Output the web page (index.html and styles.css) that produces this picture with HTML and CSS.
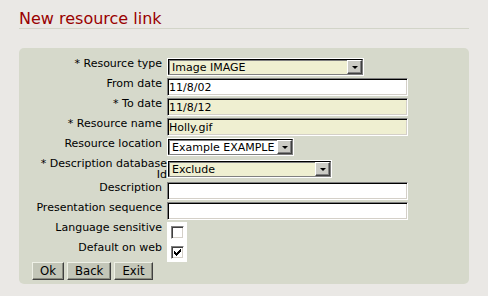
FILE: index.html
```html
<!DOCTYPE html>
<html>
<head>
<meta charset="utf-8">
<title>New resource link</title>
<link rel="stylesheet" href="styles.css">
</head>
<body>
<h1 class="title">New resource link</h1>
<form class="panel">
  <div class="grid">
    <label class="lbl">* Resource type</label>
    <div class="fld"><span class="sel sel-type"><select class="req"><option>Image IMAGE</option></select><span class="arrow"></span></span></div>

    <label class="lbl">From date</label>
    <div class="fld"><input class="txt" type="text" value="11/8/02"></div>

    <label class="lbl">* To date</label>
    <div class="fld"><input class="txt req" type="text" value="11/8/12"></div>

    <label class="lbl">* Resource name</label>
    <div class="fld"><input class="txt req" type="text" value="Holly.gif"></div>

    <label class="lbl">Resource location</label>
    <div class="fld"><span class="sel sel-loc"><select><option>Example EXAMPLE</option></select><span class="arrow"></span></span></div>

    <label class="lbl lbl-two">* Description database Id</label>
    <div class="fld"><span class="sel sel-db"><select class="req"><option>Exclude</option></select><span class="arrow"></span></span></div>

    <label class="lbl">Description</label>
    <div class="fld"><input class="txt" type="text" value=""></div>

    <label class="lbl">Presentation sequence</label>
    <div class="fld"><input class="txt" type="text" value=""></div>

    <label class="lbl">Language sensitive</label>
    <div class="fld fld-check"><span class="check"></span></div>

    <label class="lbl">Default on web</label>
    <div class="fld fld-check"><span class="check"><svg width="9" height="9" viewBox="0 0 9 9"><path d="M1 3h1v1h1v1h1v-1h1v-1h1v-1h1v-1h1v3h-1v1h-1v1h-1v1h-1v1h-1v-1h-1v-1h-1z" fill="#000"/></svg></span></div>
  </div>
  <div class="buttons">
    <button type="button" class="btn">Ok</button><button type="button" class="btn">Back</button><button type="button" class="btn">Exit</button>
  </div>
</form>
</body>
</html>
```
FILE: styles.css
```css
html, body {
  margin: 0;
  background: #eae8e5;
}
body {
  padding: 10px 19px 0 19px;
  font-family: "DejaVu Sans", Verdana, sans-serif;
  font-size: 11px;
  color: #000;
}
.title {
  margin: 0;
  font-size: 16px;
  font-weight: normal;
  line-height: 18px;
  color: #990000;
  border-bottom: 1px solid #d2d4c8;
}
.panel {
  margin-top: 19px;
  background: #d6d9cb;
  border-radius: 5px;
  padding: 10px 13px 4px 13px;
}
.grid {
  display: grid;
  grid-template-columns: 130px 1fr;
  column-gap: 5px;
  row-gap: 0;
}
.lbl {
  text-align: right;
  line-height: 11px;
  padding-bottom: 2px;
  align-self: start;
  white-space: nowrap;
}
.lbl-two {
  white-space: normal;
  margin-right: -5px;
  padding-right: 0;
}
.fld {
  align-self: center;
  display: flex;
  padding-bottom: 2px;
}
.fld-check {
  padding-bottom: 0;
  width: 20px;
  height: 20px;
  background: #fff;
  box-sizing: border-box;
  padding: 4px 0 0 4px;
}
.txt {
  box-sizing: border-box;
  width: 241px;
  height: 18px;
  margin: 0;
  padding: 0 0 0 1px;
  font-family: "DejaVu Sans", Verdana, sans-serif;
  font-size: 11px;
  color: #000;
  background: #fff;
  border: 1px solid;
  border-color: #808080 #fff #fff #808080;
  box-shadow: inset 1px 1px 0 #000, inset -1px -1px 0 #d4d0c8;
  outline: none;
}
.req {
  background-color: #efefd1;
}
.sel {
  position: relative;
  display: inline-block;
  box-sizing: border-box;
  height: 18px;
  background: #fff;
  padding: 1px;
}
.sel select {
  -webkit-appearance: none;
  appearance: none;
  box-sizing: border-box;
  width: 100%;
  height: 16px;
  margin: 0;
  padding: 0 0 0 3px;
  font-family: "DejaVu Sans", Verdana, sans-serif;
  font-size: 11px;
  color: #000;
  border: 1px solid;
  border-color: #000 #808080 #808080 #000;
  box-shadow: inset 1px 1px 0 #808080;
  border-radius: 0;
  outline: none;
  background-color: #fff;
}
.sel select.req {
  background-color: #efefd1;
}
.sel-type { width: 197px; }
.sel-loc { width: 127px; }
.sel-db { width: 165px; }
.arrow {
  position: absolute;
  top: 2px;
  right: 2px;
  width: 15px;
  height: 14px;
  box-sizing: border-box;
  background: #cbcbc5;
  border: 1px solid;
  border-color: #fff #404040 #404040 #fff;
  box-shadow: inset -1px -1px 0 #808080;
}
.arrow::after {
  content: "";
  position: absolute;
  left: 4px;
  top: 5px;
  border-left: 3px solid transparent;
  border-right: 3px solid transparent;
  border-top: 3px solid #000;
}
.check {
  display: block;
  box-sizing: border-box;
  width: 13px;
  height: 13px;
  background: #fff;
  border: 1px solid;
  border-color: #808080 #fff #fff #808080;
  box-shadow: inset 1px 1px 0 #404040, inset -1px -1px 0 #d4d0c8;
  padding: 1px 0 0 1px;
}
.check svg {
  display: block;
  margin: 0 0 0 0;
}
.buttons {
  display: flex;
  gap: 3px;
  margin-top: 0;
}
.btn {
  box-sizing: border-box;
  height: 18px;
  margin: 0;
  padding: 0 7px;
  font-family: "Liberation Sans Narrow", "DejaVu Sans Condensed", sans-serif;
  font-size: 13px;
  line-height: 14px;
  color: #000;
  background: #c3c6b8;
  border: 1px solid;
  border-color: #eef0e6 #404040 #404040 #eef0e6;
  box-shadow: inset -1px -1px 0 #8a8c80;
  border-radius: 0;
}
```
